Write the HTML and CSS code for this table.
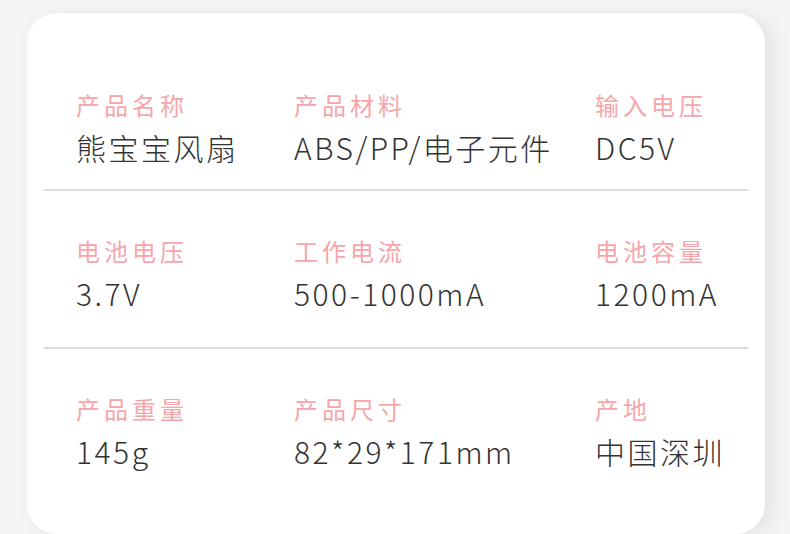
FILE: index.html
```html
<!DOCTYPE html>
<html lang="zh-CN">
<head>
<meta charset="utf-8">
<title>产品参数</title>
<link rel="stylesheet" href="styles.css">
</head>
<body>
<div class="card">
  <div class="row">
    <div class="cell"><div class="label">产品名称</div><div class="value">熊宝宝风扇</div></div>
    <div class="cell"><div class="label">产品材料</div><div class="value">ABS/PP/电子元件</div></div>
    <div class="cell"><div class="label">输入电压</div><div class="value">DC5V</div></div>
  </div>
  <div class="row">
    <div class="cell"><div class="label">电池电压</div><div class="value">3.7V</div></div>
    <div class="cell"><div class="label">工作电流</div><div class="value">500-1000mA</div></div>
    <div class="cell"><div class="label">电池容量</div><div class="value">1200mA</div></div>
  </div>
  <div class="row">
    <div class="cell"><div class="label">产品重量</div><div class="value">145g</div></div>
    <div class="cell"><div class="label">产品尺寸</div><div class="value">82*29*171mm</div></div>
    <div class="cell"><div class="label">产地</div><div class="value">中国深圳</div></div>
  </div>
</div>
</body>
</html>
```
FILE: styles.css
```css
html, body {
  margin: 0;
  padding: 0;
}
body {
  width: 790px;
  height: 534px;
  overflow: hidden;
  background: #f5f5f5;
  font-family: "Noto Sans CJK SC", "Noto Sans", sans-serif;
}
.card {
  box-sizing: border-box;
  margin: 13px 0 0 27px;
  width: 738px;
  height: 521px;
  background: #ffffff;
  border-radius: 30px;
  box-shadow: 8px 2px 20px rgba(0, 0, 0, 0.08);
  padding: 32px 17px 0;
}
.row {
  display: grid;
  grid-template-columns: 218px 301px 1fr;
  padding: 45px 0 34px 32px;
  border-bottom: 2px solid #dcdcdc;
}
.row:first-child {
  padding-bottom: 22px;
}
.row:last-child {
  border-bottom: none;
}
.label {
  font-size: 24px;
  font-weight: 400;
  line-height: 30px;
  letter-spacing: 4px;
  color: #f6a6aa;
}
.value {
  margin-top: 7px;
  font-size: 30px;
  font-weight: 300;
  line-height: 40px;
  letter-spacing: 2.5px;
  color: #333333;
}
```
